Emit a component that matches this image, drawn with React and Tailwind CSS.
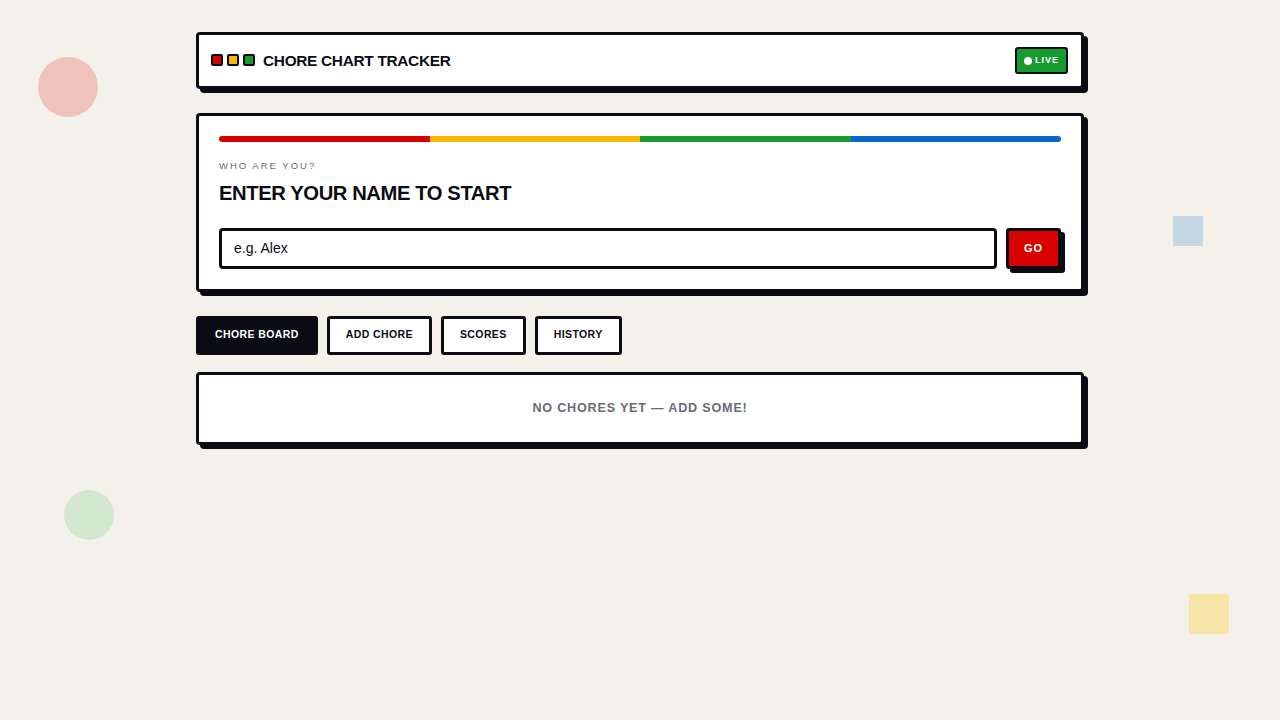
import React, { useState } from 'react';

const font = { fontFamily: '"Liberation Sans", Arial, sans-serif' };

const tabs = ['Chore Board', 'Add Chore', 'Scores', 'History'];

function App() {
  const [name, setName] = useState('');
  const [active, setActive] = useState(0);

  return (
    <div className="relative min-h-screen overflow-hidden bg-[#f4f1ea] text-[#0b0b14]" style={font}>
      {/* Background shapes */}
      <div className="absolute left-[38px] top-[57px] h-[60px] w-[60px] rounded-full bg-[#efc2bc]" />
      <div className="absolute left-[1173px] top-[216px] h-[30px] w-[30px] bg-[#c5d6e4]" />
      <div className="absolute left-[64px] top-[490px] h-[50px] w-[50px] rounded-full bg-[#d3e7d0]" />
      <div className="absolute left-[1189px] top-[594px] h-[40px] w-[40px] rounded-[3px] bg-[#f6e4a9]" />

      <div className="relative mx-auto flex w-[888px] flex-col pt-[32px]">
        {/* Header */}
        <div className="flex h-[57px] items-center justify-between rounded-[4px] border-[3px] border-[#0b0b14] bg-white pl-[12px] pr-[13px] shadow-[4px_4px_0_#0b0b14]">
          <div className="flex items-center">
            <div className="flex gap-[4px]">
              <span className="h-[12px] w-[12px] rounded-[2px] border-2 border-[#0b0b14] bg-[#d90000]" />
              <span className="h-[12px] w-[12px] rounded-[2px] border-2 border-[#0b0b14] bg-[#f5b800]" />
              <span className="h-[12px] w-[12px] rounded-[2px] border-2 border-[#0b0b14] bg-[#169b2e]" />
            </div>
            <h1 className="ml-[8px] text-[15.4px] font-bold tracking-[-0.3px]">CHORE CHART TRACKER</h1>
          </div>
          <div className="flex h-[27px] items-center gap-[3px] rounded-[3px] border-2 border-[#0b0b14] bg-[#169b2e] px-[7px] text-[9px] font-bold tracking-[1px] text-white">
            <span className="h-[8px] w-[8px] rounded-full bg-white" />
            LIVE
          </div>
        </div>

        {/* Name card */}
        <div className="mt-[24px] rounded-[4px] border-[3px] border-[#0b0b14] bg-white p-[20px] shadow-[4px_4px_0_#0b0b14]">
          <div className="flex h-[6px] overflow-hidden rounded-full">
            <div className="flex-1 bg-[#d90000]" />
            <div className="flex-1 bg-[#f5b800]" />
            <div className="flex-1 bg-[#169b2e]" />
            <div className="flex-1 bg-[#0a66c8]" />
          </div>
          <p className="mt-[17px] text-[9.5px] tracking-[2px] text-[#6b6b70]">WHO ARE YOU?</p>
          <h2 className="mt-[5px] text-[20.2px] font-bold tracking-[-0.4px]">ENTER YOUR NAME TO START</h2>
          <div className="mt-[19px] flex gap-[9px]">
            <input
              value={name}
              onChange={(e) => setName(e.target.value)}
              placeholder="e.g. Alex"
              className="h-[41px] flex-1 rounded-[4px] border-[3px] border-[#0b0b14] px-[12px] text-[14px] text-[#0b0b14] placeholder-[#0b0b14] outline-none"
            />
            <button className="h-[41px] w-[55px] rounded-[3px] border-[3px] border-[#0b0b14] bg-[#d90000] text-[11px] font-bold tracking-[1px] text-white shadow-[4px_4px_0_#0b0b14]">
              GO
            </button>
          </div>
        </div>

        {/* Tabs */}
        <div className="mt-[24px] flex gap-[9px]">
          {tabs.map((t, i) => (
            <button
              key={t}
              onClick={() => setActive(i)}
              className={`h-[39px] rounded-[3px] border-[3px] border-[#0b0b14] px-[16px] text-[10.5px] font-bold tracking-[0.4px] ${
                active === i ? 'bg-[#0b0b14] text-white' : 'bg-white text-[#0b0b14]'
              }`}
            >
              {t.toUpperCase()}
            </button>
          ))}
        </div>

        {/* Board */}
        <div className="mt-[17px] flex h-[73px] items-center justify-center rounded-[4px] border-[3px] border-[#0b0b14] bg-white shadow-[4px_4px_0_#0b0b14]">
          <p className="text-[12.6px] font-bold tracking-[0.8px] text-[#6b6b75]">NO CHORES YET — ADD SOME!</p>
        </div>
      </div>
    </div>
  );
}

export default App;
